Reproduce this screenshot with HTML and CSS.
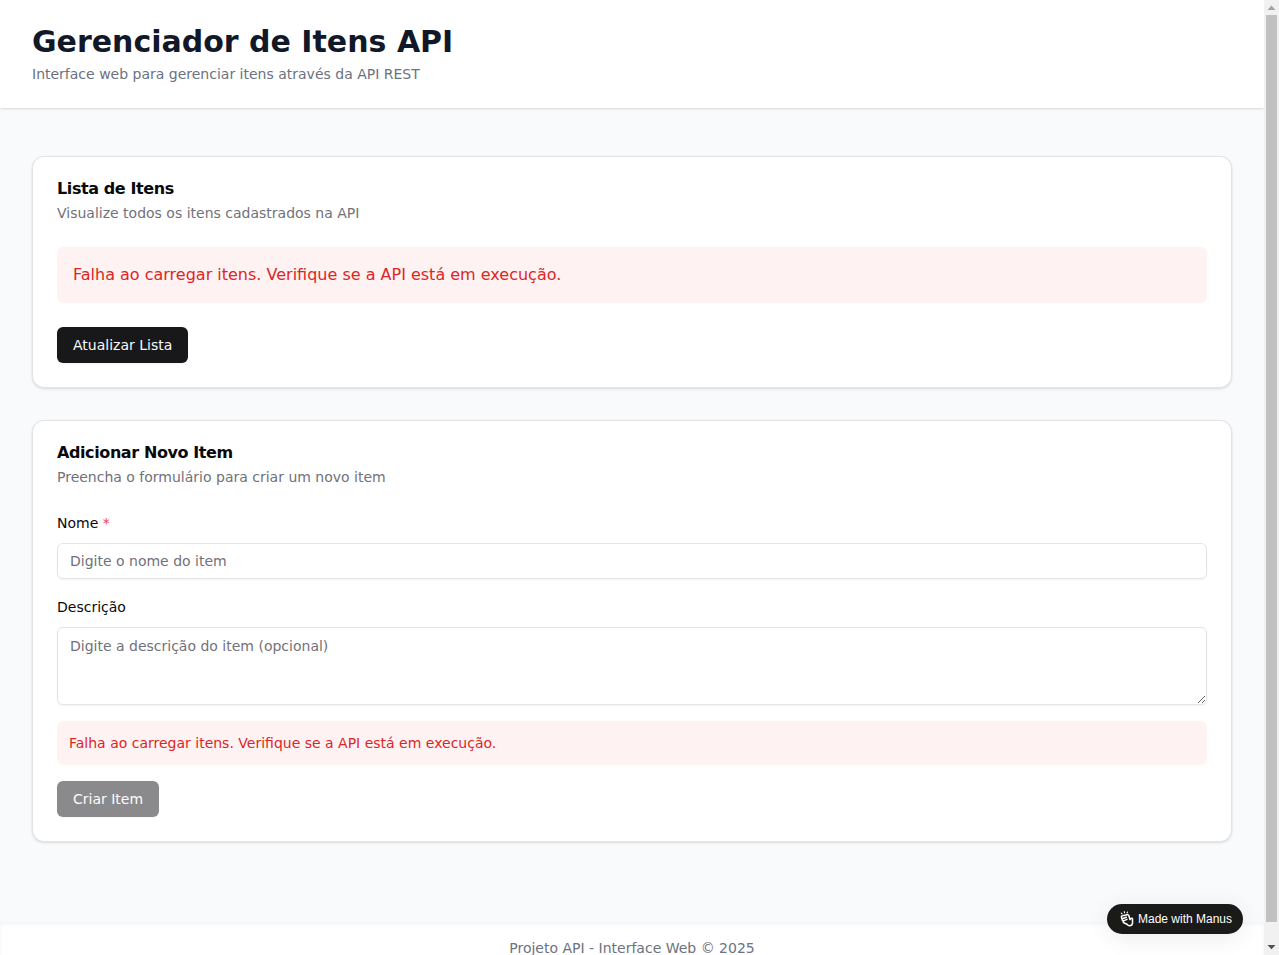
FILE: index.html
```html
<!DOCTYPE html>
<html lang="pt-BR">
<head>
<meta charset="utf-8">
<title>Gerenciador de Itens API</title>
<link rel="stylesheet" href="styles.css">
</head>
<body>
<div class="viewport">
<div class="page">
  <header class="header">
    <h1>Gerenciador de Itens API</h1>
    <p>Interface web para gerenciar itens através da API REST</p>
  </header>
  <main class="main">
    <section class="card">
      <h2>Lista de Itens</h2>
      <p class="desc">Visualize todos os itens cadastrados na API</p>
      <div class="alert alert-lg">Falha ao carregar itens. Verifique se a API está em execução.</div>
      <button class="btn">Atualizar Lista</button>
    </section>
    <section class="card">
      <h2>Adicionar Novo Item</h2>
      <p class="desc">Preencha o formulário para criar um novo item</p>
      <form class="form">
        <div class="field">
          <label for="nome">Nome <span class="required">*</span></label>
          <input id="nome" class="control" placeholder="Digite o nome do item">
        </div>
        <div class="field">
          <label for="descricao">Descrição</label>
          <textarea id="descricao" class="control area" placeholder="Digite a descrição do item (opcional)"></textarea>
        </div>
        <div class="alert">Falha ao carregar itens. Verifique se a API está em execução.</div>
        <button class="btn" disabled>Criar Item</button>
      </form>
    </section>
  </main>
  <footer class="footer">Projeto API - Interface Web © 2025</footer>
</div>
<div class="scrollbar">
  <svg class="arrow" viewBox="0 0 15 15"><path d="M3.500 10h8L7.500 5.500z" fill="#a3a3a3"/></svg>
  <div class="thumb"></div>
  <svg class="arrow" viewBox="0 0 15 15"><path d="M3.500 5h8L7.500 9.300z" fill="#505050"/></svg>
</div>
</div>
<a class="badge">
  <svg viewBox="0 0 16 16" fill="none" stroke="#fff" stroke-width="1.500" stroke-linecap="round" stroke-linejoin="round"><path d="M2.300 2.200l.8.7M5.300.6l.2 1.200M8.600 1l-.6 1.100" stroke-width="1.100"/><path d="M2.500 6.200Q2 4.800 3.600 4.700L8.300 3.700Q10 3.600 10 5.200L11 8.600 12.100 7.400Q13.300 6.700 13.500 8.200V12.300Q13.100 14.700 10.700 14.700Q9 14.700 8 13.200L5.300 12Q3.800 11.500 4.300 9.900Q2.800 9.400 3.300 8Q2.500 7.400 2.500 6.200zM3.500 7.700l3.800-1.400M4.500 9.900l3.500-1.500"/></svg>
  <span>Made with Manus</span>
</a>
</body>
</html>
```
FILE: styles.css
```css
* { box-sizing: border-box; margin: 0; }
body { font-family: "DejaVu Sans", sans-serif; color: #09090b; overflow: hidden; }
.viewport { display: flex; height: 955px; overflow: hidden; }
.page { flex: 1; display: flex; flex-direction: column; height: 990px; background: #f9fafb; }
.header { height: 108px; padding: 24px 32px; background: #fff; box-shadow: 0 1px 3px rgba(0,0,0,.1), 0 1px 2px -1px rgba(0,0,0,.1); }
.header h1 { font-size: 30px; line-height: 36px; color: #111827; }
.header p { margin-top: 4px; font-size: 14px; line-height: 20px; color: #6b7280; }
.main { padding: 48px 32px 80px; display: grid; gap: 32px; }
.card { padding: 24px; background: #fff; border: 1px solid #e4e4e7; border-radius: 12px; box-shadow: 0 1px 3px rgba(0,0,0,.1), 0 1px 2px -1px rgba(0,0,0,.1); }
.card h2 { font-size: 16px; line-height: 16px; letter-spacing: -.4px; }
.desc { margin-top: 6px; font-size: 14px; line-height: 20px; color: #71717a; }
.alert { padding: 12px; font-size: 14px; line-height: 20px; color: #dc2626; background: #fef2f2; border-radius: 6px; }
.alert-lg { margin: 24px 0; padding: 16px; font-size: 16px; line-height: 24px; }
.btn { display: block; height: 36px; padding: 0 16px; border: 0; border-radius: 6px; font: 14px/20px "DejaVu Sans", sans-serif; color: #fafafa; background: #18181b; box-shadow: 0 1px 2px rgba(0,0,0,.05); }
.btn:disabled { opacity: .5; }
.form { margin-top: 24px; display: flex; flex-direction: column; align-items: stretch; gap: 16px; }
.form .btn { align-self: flex-start; }
.field { display: flex; flex-direction: column; gap: 8px; }
.field label { font-size: 14px; line-height: 24px; }
.required { color: #ef4444; }
.control { width: 100%; height: 36px; padding: 4px 12px; border: 1px solid #e4e4e7; border-radius: 6px; background: transparent; font: 14px/20px "DejaVu Sans", sans-serif; box-shadow: 0 1px 2px rgba(0,0,0,.05); }
.control::placeholder { color: #71717a; opacity: 1; }
.area { display: block; height: 78px; padding: 8px 12px; resize: vertical; }
.footer { flex: 1; padding: 16px 0; text-align: center; font-size: 14px; line-height: 20px; color: #6b7280; background: #fff; box-shadow: inset 0 2px 4px rgba(0,0,0,.05); }
.scrollbar { width: 15px; display: flex; flex-direction: column; background: #f1f1f1; }
.arrow { width: 15px; height: 15px; }
.thumb { height: 907px; margin: 0 2px; margin-bottom: auto; background: #c1c1c1; }
.badge { position: absolute; right: 36px; bottom: 21px; width: 136px; height: 30px; padding: 0 11px 0 12px; display: flex; align-items: center; gap: 3px; border-radius: 15px; background: #1a1a19; color: #fff; font: 12px "Liberation Sans", sans-serif; white-space: nowrap; box-shadow: 0 4px 24px rgba(0,0,0,.08); }
.badge svg { width: 16px; height: 16px; flex: none; }
```
